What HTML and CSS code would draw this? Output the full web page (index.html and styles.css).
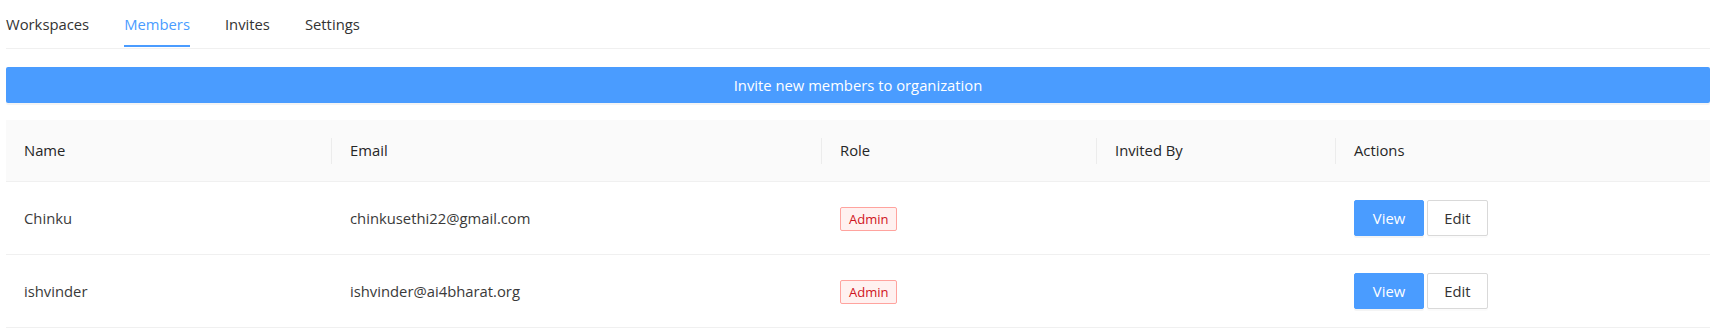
FILE: index.html
```html
<!DOCTYPE html>
<html lang="en">
<head>
    <meta charset="UTF-8">
    <meta name="viewport" content="width=device-width, initial-scale=1.0">
    <title>Organization Members</title>
    <link rel="stylesheet" href="styles.css">
</head>
<body>

    <div class="page">
        <nav class="tabs">
            <a class="tab" href="#">Workspaces</a>
            <a class="tab active" href="#">Members</a>
            <a class="tab" href="#">Invites</a>
            <a class="tab" href="#">Settings</a>
        </nav>

        <button class="invite-btn">Invite new members to organization</button>

        <table class="members">
            <colgroup>
                <col class="col-name">
                <col class="col-email">
                <col class="col-role">
                <col class="col-invited">
                <col class="col-actions">
            </colgroup>
            <thead>
                <tr>
                    <th>Name</th>
                    <th>Email</th>
                    <th>Role</th>
                    <th>Invited By</th>
                    <th>Actions</th>
                </tr>
            </thead>
            <tbody>
                <tr>
                    <td>Chinku</td>
                    <td>chinkusethi22@gmail.com</td>
                    <td><span class="tag">Admin</span></td>
                    <td></td>
                    <td>
                        <div class="actions">
                            <button class="btn btn-primary">View</button>
                            <button class="btn">Edit</button>
                        </div>
                    </td>
                </tr>
                <tr>
                    <td>ishvinder</td>
                    <td>ishvinder@ai4bharat.org</td>
                    <td><span class="tag">Admin</span></td>
                    <td></td>
                    <td>
                        <div class="actions">
                            <button class="btn btn-primary">View</button>
                            <button class="btn">Edit</button>
                        </div>
                    </td>
                </tr>
            </tbody>
        </table>
    </div>

</body>
</html>
```

FILE: styles.css
```css
* {
    box-sizing: border-box;
    margin: 0;
    padding: 0;
}

body {
    font-family: 'Segoe UI', 'Open Sans', sans-serif;
    font-size: 14.8px;
    color: #333;
    background-color: #fff;
}

.page {
    margin: 0 7px 0 6px;
}

/* Вкладки */
.tabs {
    display: flex;
    align-items: center;
    gap: 35px;
    height: 49px;
    border-bottom: 1px solid #f0f0f0;
}

.tab {
    position: relative;
    display: flex;
    align-items: center;
    height: 100%;
    color: #333;
    text-decoration: none;
}

.tab.active {
    color: #4a9cff;
}

.tab.active::after {
    content: "";
    position: absolute;
    left: 0;
    right: 0;
    bottom: 1px;
    height: 2px;
    background-color: #4a9cff;
}

.invite-btn {
    display: block;
    width: 100%;
    height: 36px;
    margin: 18px 0 17px;
    background-color: #4a9cff;
    color: #fff;
    border: none;
    border-radius: 2px;
    font-family: inherit;
    font-size: 14.8px;
    box-shadow: 0 2px 0 rgba(0, 0, 0, 0.045);
    cursor: pointer;
}

/* Таблица */
.members {
    width: 100%;
    border-collapse: collapse;
    table-layout: fixed;
}

.col-name { width: 326px; }
.col-email { width: 490px; }
.col-role { width: 275px; }
.col-invited { width: 239px; }

.members th,
.members td {
    padding: 18px;
    line-height: 25px;
    text-align: left;
    border-bottom: 1px solid #f0f0f0;
}

.members th {
    position: relative;
    background-color: #fafafa;
    font-weight: 500;
    color: #262626;
}

.members th:not(:last-child)::before {
    content: "";
    position: absolute;
    right: 0;
    top: 50%;
    width: 1px;
    height: 26px;
    transform: translateY(-50%);
    background-color: #ececec;
}

.members td {
    color: #3a3a3a;
}

.tag {
    display: inline-block;
    height: 24px;
    padding: 0 8px;
    font-size: 13px;
    line-height: 22px;
    color: #cf1322;
    background-color: #fff1f0;
    border: 1px solid #ffa39e;
    border-radius: 2px;
    vertical-align: middle;
}

.actions {
    display: flex;
    gap: 3px;
}

.btn {
    height: 36px;
    padding: 0 16px;
    font-family: inherit;
    font-size: 14.8px;
    color: #333;
    background-color: #fff;
    border: 1px solid #d9d9d9;
    border-radius: 2px;
    box-shadow: 0 2px 0 rgba(0, 0, 0, 0.016);
    cursor: pointer;
}

.btn-primary {
    width: 70px;
    color: #fff;
    background-color: #4a9cff;
    border-color: #4a9cff;
    box-shadow: 0 2px 0 rgba(0, 0, 0, 0.045);
}

.btn:not(.btn-primary) {
    width: 61px;
}
```
